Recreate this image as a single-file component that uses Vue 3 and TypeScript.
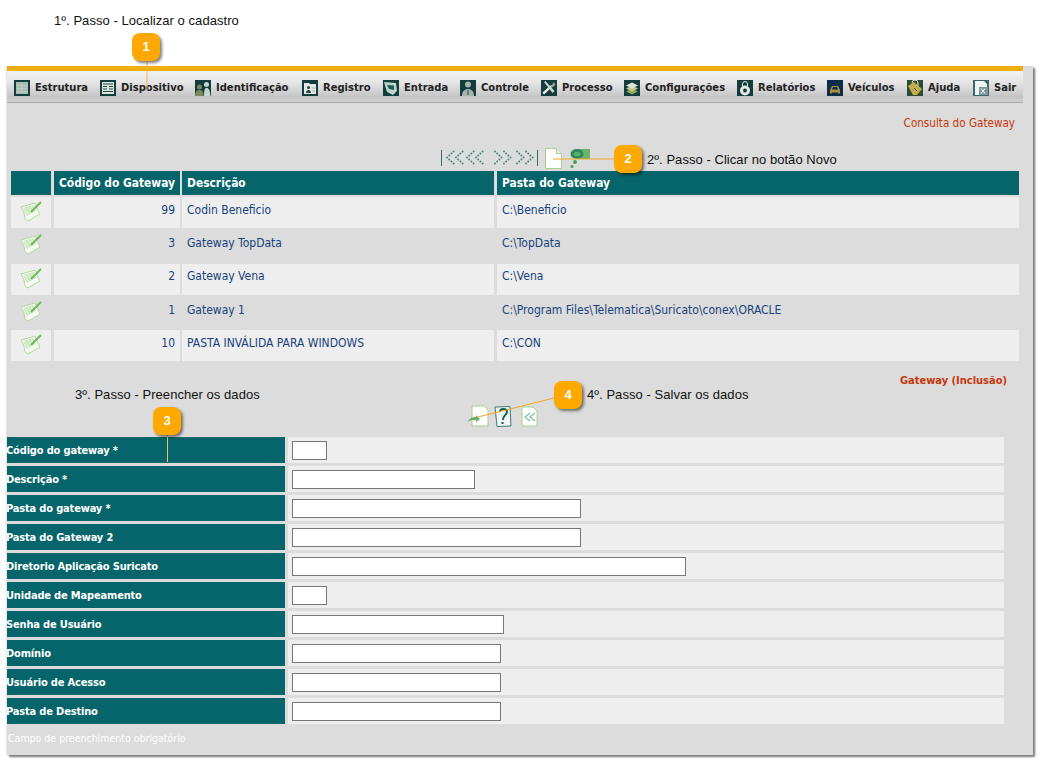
<script setup lang="ts">
interface Shape { d: string; fill?: string; stroke?: string }
interface NavItem { label: string; bg?: string; shapes: Shape[] }

const navItems: NavItem[] = [
  { label: 'Estrutura', shapes: [{ d: 'M2 2h12v12H2z', fill: '#a9bdb3' }, { d: 'M3 5.500h10M3 8.500h10M3 11.500h10M8 3v10', stroke: '#bccbc3' }] },
  { label: 'Dispositivo', shapes: [{ d: 'M2 2h12v12H2z', fill: '#dbe6df' }, { d: 'M3 4h10M3 6.500h4M9 6.500h4M3 9h4M9 9h4M3 11.500h10', stroke: '#1d4a48' }] },
  { label: 'Identificação', shapes: [{ d: 'M2 7a2.500 2.500 0 1 1 5 0a2.500 2.500 0 1 1-5 0M0 16c0-4 2-6 3.500-6h2c2 0 3 2 3 6z', fill: '#75895c' }, { d: 'M9 4.500a2.500 2.500 0 1 1 5 0a2.500 2.500 0 1 1-5 0M9 16c0-6 1-8 2-8h1c1.500 0 3 2 3.500 8z', fill: '#c6d6cf' }] },
  { label: 'Registro', shapes: [{ d: 'M2 3h5l1 1h6v10H2z', fill: '#e2e9e4' }, { d: 'M5 7.500a1.500 1.500 0 1 1 3 0a1.500 1.500 0 1 1-3 0M4 13c0-2 1-3 2.500-3S9 11 9 13z', fill: '#1d4a48' }, { d: 'M10 8h3M10 11h3', stroke: '#9fb4a8' }] },
  { label: 'Entrada', shapes: [{ d: 'M1 2l12 1 1 8-4 4-6-3z', fill: '#bcd6cc' }, { d: 'M4 5l7 .500v4.500l-5-1z', fill: '#1d5a58' }] },
  { label: 'Controle', shapes: [{ d: 'M5 4.500a3 3 0 1 1 6 0a3 3 0 1 1-6 0M2 16c0-5 3-7 6-7s6 2 6 7z', fill: '#a4b6ac' }, { d: 'M8 10v5', stroke: '#1d4a48' }] },
  { label: 'Processo', shapes: [{ d: 'M2 13.500L11 5', stroke: '#eef2ee' }, { d: 'M1.500 12.500l8-7 1.500 1.500-8 7.500z', fill: '#eef2ee' }, { d: 'M3 2l1.500-1 9 10-2 2z', fill: '#c8d4cc' }, { d: 'M10 6l3-4 1.500 3-3 2.500z', fill: '#8aa596' }] },
  { label: 'Configurações', shapes: [{ d: 'M2 11.500l6-3 6 3-6 3z', fill: '#8fa85c' }, { d: 'M2 8.500l6-3 6 3-6 3z', fill: '#c5c98c' }, { d: 'M2 5.500l6-3 6 3-6 3z', fill: '#dfe6d0' }] },
  { label: 'Relatórios', shapes: [{ d: 'M5.500 6V4a2.500 2.500 0 0 1 5 0v2', stroke: '#e3e9e5' }, { d: 'M3 10.500a5 5 0 1 1 10 0a5 5 0 1 1-10 0', fill: '#e3e9e5' }, { d: 'M6 10.500a2 2 0 1 1 4 0a2 2 0 1 1-4 0', fill: '#133c3d' }] },
  { label: 'Veículos', bg: '#0c2c48', shapes: [{ d: 'M3 10l2-4h6l2 4v3.500h-2v-1H5v1H3z', fill: '#a78f3f' }, { d: 'M6 7h4l1 2.500H5z', fill: '#0c2c48' }] },
  { label: 'Ajuda', bg: '#2f4a32', shapes: [{ d: 'M1 6l6-4 8 7-5 6H6z', fill: '#c2ad4e' }, { d: 'M5 3a3 3 0 0 1 6 0v3', stroke: '#e4ead0' }, { d: 'M7 8l3 3', stroke: '#5b5520' }] },
  { label: 'Sair', bg: '#3f6468', shapes: [{ d: 'M2 1h9l3 3v11H2z', fill: '#eef3f3' }, { d: 'M6 7h9v8H6z', fill: '#7d9a9a' }, { d: 'M8 8.500l4 5M12 8.500l-4 5', stroke: '#fff' }] },
]

interface Gateway { code: string; description: string; folder: string }
const gateways: Gateway[] = [
  { code: '99', description: 'Codin Beneficio', folder: 'C:\\Beneficio' },
  { code: '3', description: 'Gateway TopData', folder: 'C:\\TopData' },
  { code: '2', description: 'Gateway Vena', folder: 'C:\\Vena' },
  { code: '1', description: 'Gateway 1', folder: 'C:\\Program Files\\Telematica\\Suricato\\conex\\ORACLE' },
  { code: '10', description: 'PASTA INVÁLIDA PARA WINDOWS', folder: 'C:\\CON' },
]

interface Field { label: string; width: number }
const fields: Field[] = [
  { label: 'Código do gateway *', width: 35 },
  { label: 'Descrição *', width: 183 },
  { label: 'Pasta do gateway *', width: 289 },
  { label: 'Pasta do Gateway 2', width: 289 },
  { label: 'Diretorio Aplicação Suricato', width: 394 },
  { label: 'Unidade de Mapeamento', width: 35 },
  { label: 'Senha de Usuário', width: 212 },
  { label: 'Domínio', width: 209 },
  { label: 'Usuário de Acesso', width: 209 },
  { label: 'Pasta de Destino', width: 209 },
]

const chevronDots = (dir: number, ox: number): number[][] => {
  const pts: number[][] = []
  for (const s of [0, 9]) {
    for (let i = 0; i < 4; i++) {
      const x = dir < 0 ? ox + s + i * 2.2 : ox + s + (3 - i) * 2.2
      pts.push([x, 7.5 - i * 2])
      if (i > 0) pts.push([x, 7.5 + i * 2])
    }
  }
  return pts
}
const pagerDots: number[][] = [
  ...chevronDots(-1, 6),
  ...chevronDots(-1, 26),
  ...chevronDots(1, 54),
  ...chevronDots(1, 76),
]
</script>

<template>
  <div class="page">
    <div class="panel">
      <div class="band"></div>
      <nav class="nav">
        <a v-for="item in navItems" :key="item.label" class="nav-item">
          <svg class="nav-icon" width="16" height="16" viewBox="0 0 16 16">
            <rect width="16" height="16" :fill="item.bg || '#133c3d'" />
            <path
              v-for="(s, i) in item.shapes"
              :key="i"
              :d="s.d"
              :fill="s.fill || 'none'"
              :stroke="s.stroke || 'none'"
            />
          </svg>
          <span>{{ item.label }}</span>
        </a>
      </nav>

      <div class="consulta-title">Consulta do Gateway</div>

      <div class="pager">
        <svg width="98" height="16" viewBox="0 0 98 16">
          <path d="M.5 0v16M96.500 0v16" stroke="#2f6a68" />
          <circle v-for="(p, i) in pagerDots" :key="i" :cx="p[0]" :cy="p[1]" r=".95" fill="#3d8577" />
        </svg>
        <svg class="doc" width="17" height="21" viewBox="0 0 17 21">
          <path d="M.5 .5h11l5 5v15H.5z" fill="#fff" stroke="#a9cf8f" />
          <path d="M11.500 .5v5h5" fill="#e8f2e0" stroke="#a9cf8f" />
        </svg>
        <svg class="blob" width="20" height="21" viewBox="0 0 20 21">
          <rect x="7" y="1" width="13" height="10" fill="#6cb26c" />
          <ellipse cx="7" cy="6" rx="6.500" ry="5" fill="#2c8a5c" />
          <ellipse cx="7" cy="6" rx="3.500" ry="2" fill="#55b36f" />
          <circle cx="5" cy="14" r="2" fill="#4f9e5a" />
          <circle cx="2" cy="18.500" r="1.600" fill="#4f9e5a" />
        </svg>
      </div>

      <div class="grid">
        <div class="th"></div>
        <div class="th c2">Código do Gateway</div>
        <div class="th">Descrição</div>
        <div class="th">Pasta do Gateway</div>
        <template v-for="(g, idx) in gateways" :key="g.code">
          <div class="td edit" :class="{ odd: idx % 2 === 0 }">
            <svg width="23" height="23" viewBox="0 0 23 23">
              <path d="M1 7l14-4 2 5 3 6-12 7-3-2-1-6z" fill="#f6faf2" stroke="#b4d8a0" />
              <path d="M3 8l10-3 3 6-9 5z" fill="#cbe6bf" />
              <path d="M5 8l4 7M8 7l4 7M11 6l3 6" stroke="#f4f9ef" stroke-width=".8" />
              <path d="M11 12L21 2" stroke="#6db65c" stroke-width="2" />
            </svg>
          </div>
          <div class="td c2 num" :class="{ odd: idx % 2 === 0 }">{{ g.code }}</div>
          <div class="td" :class="{ odd: idx % 2 === 0 }">{{ g.description }}</div>
          <div class="td" :class="{ odd: idx % 2 === 0 }">{{ g.folder }}</div>
        </template>
      </div>

      <div class="inclusao-title">Gateway (Inclusão)</div>

      <div class="toolbar">
        <svg width="22" height="22" viewBox="0 0 22 22">
          <path d="M5 1h12l4 4v16H5z" fill="#fff" stroke="#a9cf8f" />
          <path d="M1 17c1-4 5-5 8-5v-2l4 4-4 3v-2c-3 0-6 0-8 2z" fill="#6fae68" />
        </svg>
        <svg class="help" width="18" height="21" viewBox="0 0 18 21">
          <path d="M1 1l15-.5L17 20 3 20.500z" fill="#eef4f2" stroke="#3d7a78" />
          <path d="M6 6c0-4 7-4 7 0 0 3-4 3-4 8M8.500 16v2" fill="none" stroke="#0d5c5c" stroke-width="2" />
        </svg>
        <svg class="back" width="17" height="21" viewBox="0 0 17 21">
          <path d="M1 1h11l4 4v15H1z" fill="#fff" stroke="#a9cf8f" />
          <path d="M9 7l-5 4 5 4M14 7l-5 4 5 4" fill="none" stroke="#7fc4a4" stroke-width="1.300" />
        </svg>
      </div>

      <form class="form" @submit.prevent>
        <div v-for="f in fields" :key="f.label" class="form-row">
          <label class="form-label">{{ f.label }}</label>
          <div class="form-value">
            <input class="form-input" type="text" :style="{ width: f.width + 'px' }" />
          </div>
        </div>
      </form>

      <div class="required">Campo de preenchimento obrigatório</div>
    </div>

    <p class="note note1">1º. Passo - Localizar o cadastro</p>
    <p class="note note2">2º. Passo - Clicar no botão Novo</p>
    <p class="note note3">3º. Passo - Preencher os dados</p>
    <p class="note note4">4º. Passo - Salvar os dados</p>

    <svg class="leaders" width="1042" height="764" viewBox="0 0 1042 764">
      <path d="M147 61V90" stroke="#f2b441" />
      <path d="M614 159H553" stroke="#f2a922" />
      <path d="M167.500 435V462" stroke="#f0c060" />
      <path d="M554 398L478 417" stroke="#f2a922" />
    </svg>

    <div class="badge b1">1</div>
    <div class="badge b2">2</div>
    <div class="badge b3">3</div>
    <div class="badge b4">4</div>
  </div>
</template>

<style scoped>
.page {
  position: relative;
  width: 1042px;
  height: 764px;
  padding: 66px 0 0 7px;
  box-sizing: border-box;
  background: #fff;
  overflow: hidden;
  font-family: "DejaVu Sans", Verdana, sans-serif;
  font-stretch: condensed;
  font-size: 12px;
}
.panel {
  width: 1026px;
  height: 689px;
  background: #dcdcdc;
  box-shadow: 2px 2px 2px #777, -1px 0 1px #e8e8e8;
  display: flex;
  flex-direction: column;
}
.band {
  width: 1016px;
  height: 5px;
  background: #efaf10;
  flex: none;
}
.nav {
  width: 1016px;
  height: 32px;
  flex: none;
  box-sizing: border-box;
  padding: 2px 0 0 7px;
  display: grid;
  grid-template-columns: 86px 95px 107px 81px 77px 81px 83px 113px 90px 80px 66px auto;
  align-items: center;
  background: linear-gradient(#f1f1f1 0%, #e6e6e6 35%, #c4c4c4 85%, #d0d0d0 100%);
  border-bottom: 1px solid #aaa;
}
.nav-item {
  display: flex;
  align-items: center;
  gap: 5px;
  font-weight: 700;
  font-size: 11.100px;
  color: #222;
  white-space: nowrap;
}
.nav-icon { flex: none; }
.consulta-title {
  width: 1008px;
  margin-top: 12px;
  height: 16px;
  line-height: 16px;
  text-align: right;
  color: #c8360a;
  font-size: 11.600px;
}
.pager {
  margin: 15px 0 0 434px;
  height: 24px;
  display: flex;
  align-items: center;
  gap: 6px;
}
.pager .blob { margin-left: 2px; }
.grid {
  margin: 1px 0 0 4px;
  width: 1008px;
  display: grid;
  grid-template-columns: 40px 125px 312px 522px;
  grid-auto-rows: 31.250px;
  column-gap: 3px;
  row-gap: 2px;
  grid-template-rows: 24px;
}
.th {
  background: #05656a;
  color: #fff;
  font-weight: 700;
  line-height: 25px;
  padding-left: 5px;
  font-size: 11.900px;
  white-space: nowrap;
}
.c2 { margin-right: -1px; }
.td {
  color: #17427c;
  padding: 5.900px 0 0 5px;
  line-height: 15px;
  white-space: nowrap;
  box-sizing: border-box;
}
.td.odd { background: #eee; }
.num { text-align: right; padding-right: 5px; padding-left: 0; }
.edit { padding: 3px 0 0 9px; }
.inclusao-title {
  width: 1000px;
  margin-top: 12px;
  height: 16px;
  line-height: 16px;
  text-align: right;
  font-weight: 700;
  font-size: 11px;
  color: #c8360a;
}
.toolbar {
  margin: 15px 0 0 460px;
  height: 24px;
  display: flex;
  align-items: center;
  gap: 5px;
}
.toolbar .back { margin-left: 4px; }
.form {
  margin-top: 9px;
  display: flex;
  flex-direction: column;
  gap: 3px;
}
.form-row {
  display: flex;
  width: 997px;
  height: 26px;
  gap: 3px;
}
.form-label {
  width: 278px;
  flex: none;
  background: #05656a;
  color: #fff;
  font-weight: 700;
  font-size: 11px;
  letter-spacing: -.17px;
  line-height: 28px;
  text-indent: -1px;
  white-space: nowrap;
}
.form-value {
  flex: none;
  width: 716px;
  background: #eee;
  display: flex;
  align-items: center;
  padding-left: 4px;
  box-sizing: border-box;
}
.form-input {
  height: 19px;
  box-sizing: border-box;
  border: 1px solid #777;
  background: #fff;
  padding: 0;
  margin: 0;
}
.required {
  margin: 7px 0 0 1px;
  height: 14px;
  line-height: 14px;
  color: #fff;
  font-size: 10.500px;
}
.note {
  position: absolute;
  margin: 0;
  font-family: "Liberation Sans", Arial, sans-serif;
  font-stretch: normal;
  font-size: 13px;
  letter-spacing: .05px;
  line-height: 14px;
  color: #111;
  white-space: nowrap;
}
.note1 { left: 54px; top: 14px; }
.note2 { left: 647px; top: 153px; }
.note3 { left: 75px; top: 388px; }
.note4 { left: 587px; top: 388px; }
.leaders {
  position: absolute;
  left: 0;
  top: 0;
  pointer-events: none;
}
.badge {
  position: absolute;
  width: 28px;
  height: 28px;
  border-radius: 8px;
  background: #ffa800;
  color: #fff;
  font-family: "Liberation Sans", Arial, sans-serif;
  font-stretch: normal;
  font-weight: 700;
  font-size: 13px;
  line-height: 28px;
  text-align: center;
  box-shadow: 2px 2px 3px rgba(0, 0, 0, .5);
}
.b1 { left: 132px; top: 33px; }
.b2 { left: 614px; top: 145px; }
.b3 { left: 153px; top: 407px; }
.b4 { left: 554px; top: 381px; }
</style>
